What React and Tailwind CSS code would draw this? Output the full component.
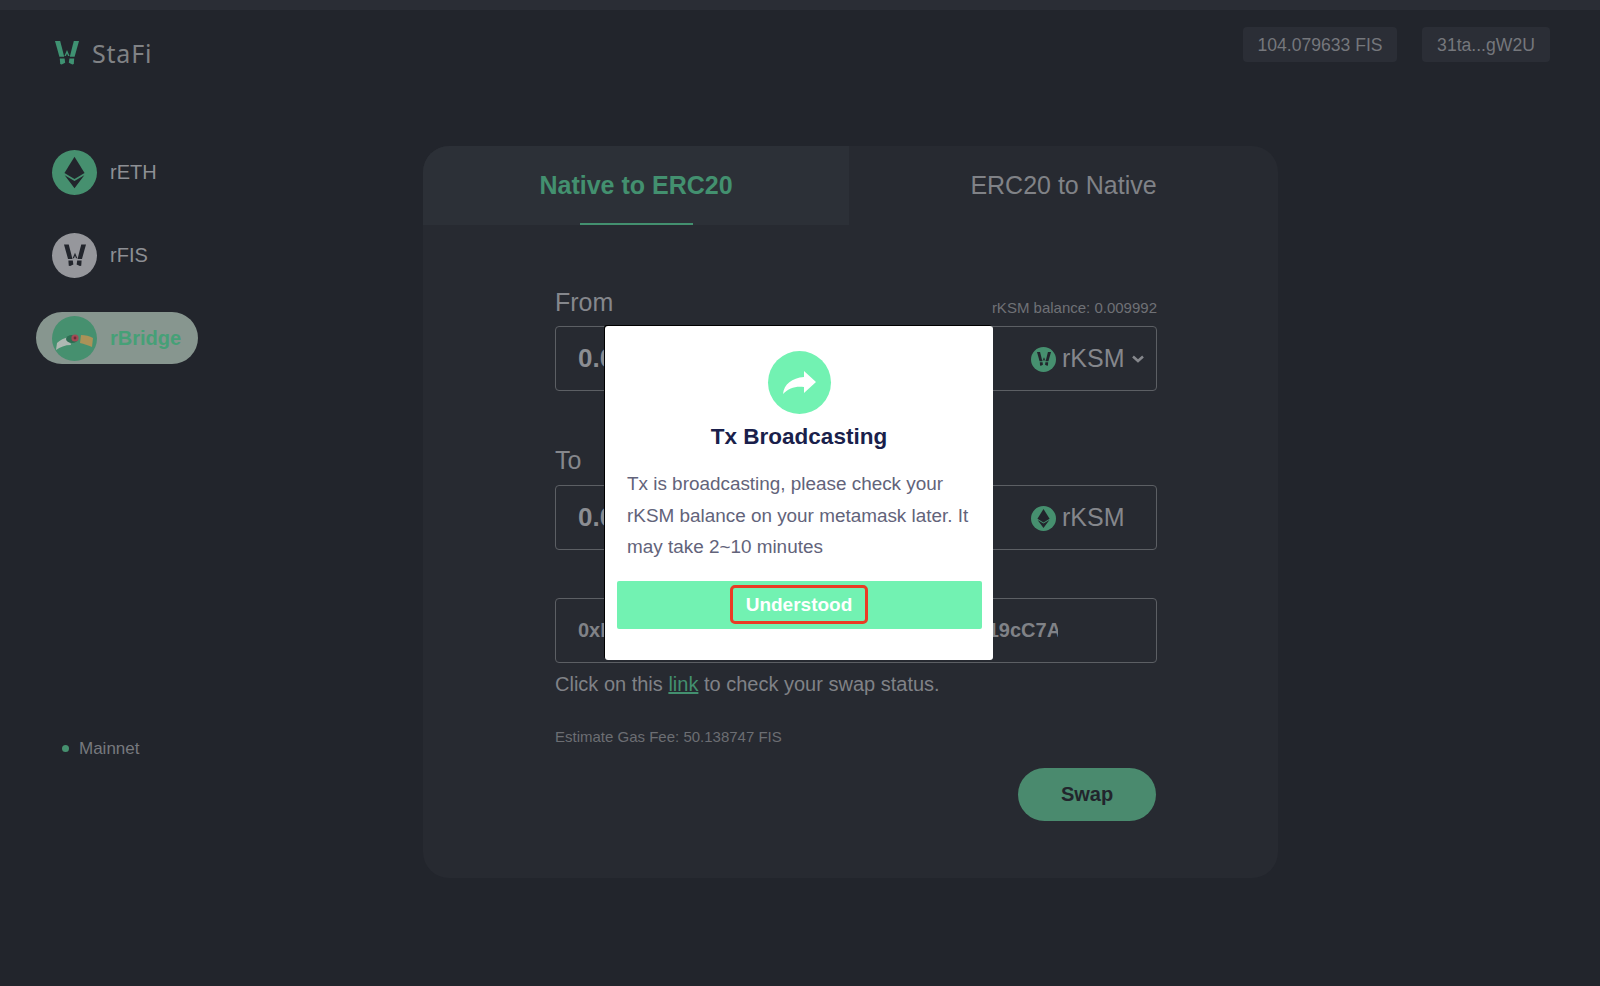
const sans = 'font-["Liberation_Sans",Arial,sans-serif]'

function StafiMark({ className, color }) {
  return (
    <svg viewBox="0 0 24 24" className={className} fill={color}>
      <path d="M0 0h5.200l4 15.800H4.400z" />
      <path d="M24 0h-5.200l-4 15.800h4.800z" />
      <path d="M4.800 17.500h4.800l.6 4.300-3.500 1.700-1.500-.4z" />
      <path d="M19.200 17.500h-4.800l-.6 4.300 3.500 1.700 1.500-.4z" />
      <path d="M12 9l2.600 6h-1.500l-1.100-2.600-1.100 2.600H9.400z" />
    </svg>
  )
}

function EthMark({ className, color }) {
  return (
    <svg viewBox="0 0 24 36" className={className} fill={color}>
      <path d="M12 0l11.500 18.600L12 25.400.5 18.600z" />
      <path d="M12 36L.8 21l11.200 6.700L23.200 21z" />
    </svg>
  )
}

function BridgeMark() {
  return (
    <svg viewBox="0 0 45 45" className="w-[45px] h-[45px] shrink-0">
      <circle cx="22.5" cy="22.5" r="22.5" fill="#46906f" />
      <path d="M4 34l1-7c3-3 7-5 12-6l2 8c-6 0-11 2-15 5z" fill="#aeb8b2" />
      <path d="M29 19c4 0 9 1 12 3l-1 9c-4-2-8-3-12-4z" fill="#ab9258" />
      <ellipse cx="20" cy="23" rx="6" ry="4" fill="#2e6d52" />
      <circle cx="23" cy="22" r="3.600" fill="#a24a55" />
      <circle cx="23" cy="22" r="1.400" fill="#6d2b35" />
    </svg>
  )
}

function NavItem({ icon, label, active }) {
  if (active) {
    return (
      <div className="flex items-center gap-[13px] h-[52px] w-[162px] rounded-full bg-[#87968f] pl-4">
        {icon}
        <span className="pb-[1px] text-[20px] font-bold text-[#46a077]">{label}</span>
      </div>
    )
  }
  return (
    <div className="flex items-center gap-[13px] h-[52px] pl-4">
      {icon}
      <span className="pb-[1px] text-[20px] text-[#8d8f94]">{label}</span>
    </div>
  )
}

function Field({ value, children }) {
  return (
    <div className="flex items-center justify-between h-[65px] rounded border border-[#5c5f64] pl-[22px] pr-[10px]">
      <span className="text-[26px] font-bold text-[#8b8d92]">{value}</span>
      {children}
    </div>
  )
}

function Token({ icon, chevron }) {
  return (
    <div className="flex items-center gap-[6px] w-[115px] pt-[1px]">
      {icon}
      <span className="text-[25px] text-[#85878c]">rKSM</span>
      {chevron && (
        <svg viewBox="0 0 12 8" className="w-[12px] h-[8px] ml-[1px]" fill="none" stroke="#85878c" strokeWidth="2.5">
          <path d="M1 1.500l5 4.500 5-4.500" />
        </svg>
      )}
    </div>
  )
}

export default function App() {
  return (
    <div className={`relative h-[986px] w-[1600px] overflow-hidden bg-[#22252c] ${sans}`}>
      <div className="h-[10px] bg-[#2a2d35]" />

      {/* Header */}
      <header className="flex items-start justify-between h-[136px] pl-[55px] pr-[50px]">
        <div className="flex items-center gap-[13px] pt-[31px]">
          <StafiMark className="w-[24px] h-[24px]" color="#3f9272" />
          <span className="font-['Noto_Sans',sans-serif] text-[25px] leading-[24px] tracking-[0.8px] text-[#808285]">StaFi</span>
        </div>
        <div className="flex gap-[25px] pt-[17px]">
          <div className="flex items-center justify-center h-[35px] w-[154px] pt-[1px] rounded bg-[#2b2e36] text-[17.6px] text-[#75777c]">104.079633 FIS</div>
          <div className="flex items-center justify-center h-[35px] w-[128px] pt-[1px] rounded bg-[#2b2e36] text-[17.6px] text-[#75777c]">31ta...gW2U</div>
        </div>
      </header>

      <div className="flex">
        {/* Sidebar */}
        <aside className="w-[423px] pl-[36px] flex flex-col">
          <div className="flex flex-col gap-[31px]">
            <NavItem
              label="rETH"
              icon={
                <div className="flex items-center justify-center w-[45px] h-[45px] rounded-full bg-[#46906f]">
                  <EthMark className="w-[21px] h-[33px]" color="#22252c" />
                </div>
              }
            />
            <NavItem
              label="rFIS"
              icon={
                <div className="flex items-center justify-center w-[45px] h-[45px] rounded-full bg-[#96979c]">
                  <StafiMark className="w-[22px] h-[23px]" color="#22252c" />
                </div>
              }
            />
            <NavItem label="rBridge" active icon={<BridgeMark />} />
          </div>
          <div className="flex items-center gap-[10px] pl-[26px] mt-[372px]">
            <span className="w-[7px] h-[7px] rounded-full bg-[#46906f]" />
            <span className="text-[17px] text-[#77797e]">Mainnet</span>
          </div>
        </aside>

        {/* Swap card */}
        <main className="w-[855px] h-[732px] rounded-[26px] bg-[#272a31] overflow-hidden">
          <div className="flex h-[79px]">
            <div className="relative flex items-center justify-center w-[426px] bg-[#2c3037] text-[25px] font-bold text-[#43906f]">
              Native to ERC20
              <span className="absolute bottom-0 left-[157px] w-[113px] h-[2px] bg-[#43906f]" />
            </div>
            <div className="flex items-center justify-center w-[429px] text-[25px] text-[#808287]">ERC20 to Native</div>
          </div>

          <div className="pl-[132px] pr-[121px] pt-[62px]">
            <div className="flex items-end justify-between h-[39px] pb-[10px]">
              <span className="text-[25px] leading-[28px] text-[#85878c]">From</span>
              <span className="text-[15px] leading-[17px] text-[#6f7176]">rKSM balance: 0.009992</span>
            </div>
            <Field value="0.0">
              <Token
                chevron
                icon={
                  <div className="flex items-center justify-center w-[25px] h-[25px] rounded-full bg-[#46906f]">
                    <StafiMark className="w-[14px] h-[14px]" color="#22252c" />
                  </div>
                }
              />
            </Field>

            <div className="text-[25px] leading-[28px] text-[#85878c] mt-[55px] mb-[11px] h-[28px]">To</div>
            <Field value="0.0">
              <Token
                icon={
                  <div className="flex items-center justify-center w-[25px] h-[25px] rounded-full bg-[#46906f]">
                    <EthMark className="w-[13px] h-[19px]" color="#22252c" />
                  </div>
                }
              />
            </Field>

            <div className="flex items-center h-[65px] mt-[48px] pb-[1px] rounded border border-[#5c5f64] pl-[22px] text-[20px] font-bold text-[#808287]">
              <span>0xB</span>
              <span className="ml-[373px] w-[70px] overflow-hidden whitespace-nowrap">19cC7A</span>
            </div>

            <p className="mt-[8px] text-[20px] leading-[26px] text-[#808287]">
              Click on this <span className="text-[#43906f] underline">link</span> to check your swap status.
            </p>
            <p className="mt-[31px] text-[15px] leading-[17px] text-[#6c6e73]">Estimate Gas Fee: 50.138747 FIS</p>

            <div className="flex justify-end mt-[23px] pr-[1px]">
              <div className="flex items-center justify-center w-[138px] h-[53px] pb-[1px] rounded-full bg-[#4a8a6e] text-[20px] font-bold text-[#22252c]">Swap</div>
            </div>
          </div>
        </main>
      </div>

      {/* Modal */}
      <div className="absolute left-[605px] top-[326px] w-[388px] h-[334px] rounded-[3px] bg-white flex flex-col items-center pt-[25px] shadow-[-1px_-1px_0_#000]">
        <div className="w-[63px] h-[63px] rounded-full bg-[#72f2b2]">
          <svg viewBox="0 0 63 63" className="w-[63px] h-[63px]" fill="white">
            <path d="M48 31L36 20v6C24 27 16 33 15 43c6-6 12-8 21-7v6z" />
          </svg>
        </div>
        <h2 className="mt-[8px] text-[22.5px] leading-[30px] font-bold text-[#1a1f4b]">Tx Broadcasting</h2>
        <p className="mt-[16px] w-full pl-[22px] text-[18.9px] leading-[31.5px] whitespace-nowrap text-[#62637a]">
          Tx is broadcasting, please check your<br />rKSM balance on your metamask later. It<br />may take 2~10 minutes
        </p>
        <div className="mt-[18px] flex items-center justify-center w-[365px] h-[48px] rounded-[2px] bg-[#72f2b2]">
          <div className="flex items-center justify-center w-[138px] h-[39px] pt-[1px] rounded-[5px] border-[3px] border-[#ea3b24] text-[19px] font-bold text-white">Understood</div>
        </div>
      </div>
    </div>
  )
}
